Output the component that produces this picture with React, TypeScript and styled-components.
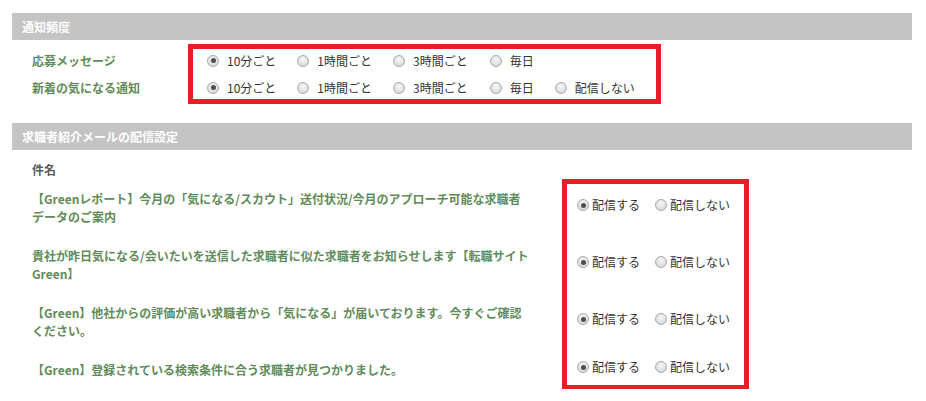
import React from "react";
import styled, { createGlobalStyle } from "styled-components";

const GlobalStyle = createGlobalStyle`
  html, body {
    margin: 0;
    padding: 0;
    background: #ffffff;
  }
  body {
    font-family: "Noto Sans CJK JP", "Noto Sans", sans-serif;
    font-size: 12px;
    color: #333333;
  }
`;

const GREEN = "#5f8c5a";
const RED = "#ea1c24";

const Page = styled.div`
  padding: 13px 14px 0 12px;
  width: 900px;
`;

const SectionHeader = styled.div<{ $gap?: number }>`
  height: 27px;
  margin-top: ${(p) => p.$gap ?? 0}px;
  background: #c4c4c4;
  color: #ffffff;
  font-weight: 700;
  font-size: 12px;
  padding-left: 10px;
  display: flex;
  align-items: center;
`;

/* ---------- section 1 ---------- */

const FreqBody = styled.div`
  display: flex;
  margin-top: 4px;
  padding-left: 20px;
`;

const LabelColumn = styled.div`
  width: 156px;
  padding: 5px 0;
  display: flex;
  flex-direction: column;
  gap: 4px;
`;

const RowLabel = styled.div`
  height: 23px;
  line-height: 23px;
  color: ${GREEN};
  font-weight: 700;
`;

const OptionsBox = styled.div`
  width: 473px;
  box-sizing: border-box;
  border: 5px solid ${RED};
  padding-left: 14px;
  display: flex;
  flex-direction: column;
  gap: 4px;
`;

const OptionRow = styled.div`
  height: 23px;
  display: flex;
  align-items: center;
`;

const Option = styled.label<{ $gap: number; $after: number }>`
  display: inline-flex;
  align-items: center;
  gap: ${(p) => p.$gap}px;
  margin-right: ${(p) => p.$after}px;
  color: #333333;
  white-space: nowrap;
  line-height: 18px;
`;

const RadioDot = styled.span<{ $checked?: boolean }>`
  position: relative;
  width: 12px;
  height: 12px;
  box-sizing: border-box;
  border-radius: 50%;
  border: 1px solid #a9a9a9;
  background: radial-gradient(circle at 50% 35%, #f6f6f6 0%, #e2e2e2 55%, #cfcfcf 100%);
  flex: none;
  &::after {
    content: "";
    display: ${(p) => (p.$checked ? "block" : "none")};
    position: absolute;
    left: 50%;
    top: 50%;
    width: 5px;
    height: 5px;
    margin: -2.5px 0 0 -2.5px;
    border-radius: 50%;
    background: #4d4d4d;
  }
`;

/* ---------- section 2 ---------- */

const SubjectHead = styled.div`
  margin-top: 11px;
  padding-left: 20px;
  line-height: 18px;
  color: #5a5a5a;
  font-weight: 700;
`;

const MailGrid = styled.div`
  display: grid;
  grid-template-columns: 530px 187px;
  padding-left: 20px;
`;

const Subject = styled.div<{ $row: number }>`
  grid-column: 1;
  grid-row: ${(p) => p.$row};
  padding: 11px 32px 10px 0;
  line-height: 18px;
  color: ${GREEN};
  font-weight: 700;
`;

const ChoiceCell = styled.div<{ $row: number }>`
  grid-column: 2;
  grid-row: ${(p) => p.$row};
  display: flex;
  align-items: center;
  padding: 0 0 5px 15px;
`;

const Highlight = styled.div`
  grid-column: 2;
  grid-row: 1 / span 4;
  border: 5px solid ${RED};
  pointer-events: none;
  margin-bottom: -1px;
`;

const freq = [
  { label: "10分ごと", after: 21 },
  { label: "1時間ごと", after: 21 },
  { label: "3時間ごと", after: 22 },
  { label: "毎日", after: 21 },
];

const subjects = [
  "【Greenレポート】今月の「気になる/スカウト」送付状況/今月のアプローチ可能な求職者データのご案内",
  "貴社が昨日気になる/会いたいを送信した求職者に似た求職者をお知らせします【転職サイトGreen】",
  "【Green】他社からの評価が高い求職者から「気になる」が届いております。今すぐご確認ください。",
  "【Green】登録されている検索条件に合う求職者が見つかりました。",
];

export default function App() {
  return (
    <>
      <GlobalStyle />
      <Page>
        <SectionHeader>通知頻度</SectionHeader>
        <FreqBody>
          <LabelColumn>
            <RowLabel>応募メッセージ</RowLabel>
            <RowLabel>新着の気になる通知</RowLabel>
          </LabelColumn>
          <OptionsBox>
            <OptionRow>
              {freq.map((f, i) => (
                <Option key={f.label} $gap={8} $after={f.after}>
                  <RadioDot $checked={i === 0} />
                  {f.label}
                </Option>
              ))}
            </OptionRow>
            <OptionRow>
              {freq.map((f, i) => (
                <Option key={f.label} $gap={8} $after={f.after}>
                  <RadioDot $checked={i === 0} />
                  {f.label}
                </Option>
              ))}
              <Option $gap={8} $after={0}>
                <RadioDot />
                配信しない
              </Option>
            </OptionRow>
          </OptionsBox>
        </FreqBody>

        <SectionHeader $gap={19}>求職者紹介メールの配信設定</SectionHeader>
        <SubjectHead>件名</SubjectHead>
        <MailGrid>
          {subjects.map((s, i) => (
            <React.Fragment key={i}>
              <Subject $row={i + 1}>{s}</Subject>
              <ChoiceCell $row={i + 1}>
                <Option $gap={3} $after={15}>
                  <RadioDot $checked />
                  配信する
                </Option>
                <Option $gap={3} $after={0}>
                  <RadioDot />
                  配信しない
                </Option>
              </ChoiceCell>
            </React.Fragment>
          ))}
          <Highlight />
        </MailGrid>
      </Page>
    </>
  );
}
